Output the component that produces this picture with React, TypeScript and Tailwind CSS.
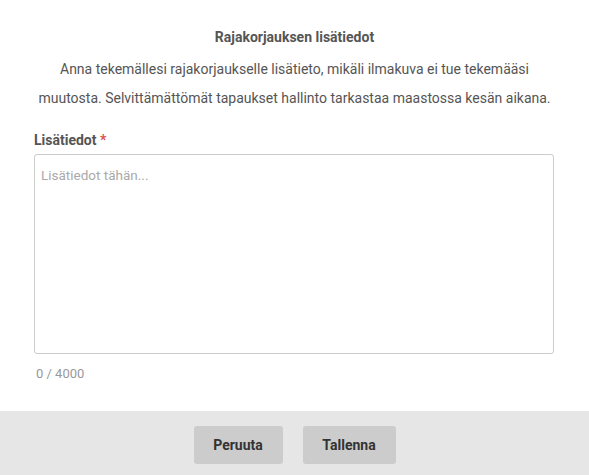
import React from "react";

export default function App() {
  return (
    <div className="w-[589px] h-[475px] bg-white flex flex-col" style={{ fontFamily: "Roboto, 'Liberation Sans', sans-serif" }}>
      <div className="h-[411px] px-[34px] pt-[27px]">
        <div className="text-center text-[14px] leading-[20px] font-bold text-[#555]">Rajakorjauksen lisätiedot</div>
        <p className="mt-[8px] text-center text-[14px] leading-[29px] text-[#555]">
          Anna tekemällesi rajakorjaukselle lisätieto, mikäli ilmakuva ei tue tekemääsi muutosta. Selvittämättömät tapaukset hallinto tarkastaa maastossa kesän aikana.
        </p>
        <label className="block mt-[17px] text-[14px] leading-[20px] font-bold text-[#555]">
          Lisätiedot <span className="text-[#d9534f]">*</span>
        </label>
        <textarea
          className="mt-[4px] block w-[520px] h-[200px] border border-[#ccc] rounded-[3px] px-[6px] pt-[11px] pb-[8px] text-[13.5px] leading-[18px] text-[#555] placeholder:text-[#aaa] resize-none outline-none"
          placeholder="Lisätiedot tähän..."
        />
        <div className="mt-[11px] ml-[2px] text-[13px] leading-[18px] text-[#999]">0 / 4000</div>
      </div>
      <div className="h-[64px] bg-[#e6e6e6] flex items-start pt-[15px] justify-center gap-[20px]">
        <button className="w-[89px] h-[38px] rounded-[3px] bg-[#cccccc] text-[14px] font-bold text-[#333]">Peruuta</button>
        <button className="w-[93px] h-[38px] rounded-[3px] bg-[#cccccc] text-[14px] font-bold text-[#333]">Tallenna</button>
      </div>
    </div>
  );
}
